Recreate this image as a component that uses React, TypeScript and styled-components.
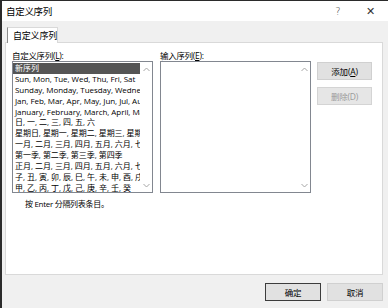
import styled, { createGlobalStyle } from 'styled-components';

const GlobalStyle = createGlobalStyle`
  html, body { margin: 0; padding: 0; background: #f0f0f0; }
  body {
    font-family: "Segoe UI", "Open Sans", "Noto Sans CJK SC", sans-serif;
    color: #000;
  }
`;

const presets = [
  'Sun, Mon, Tue, Wed, Thu, Fri, Sat',
  'Sunday, Monday, Tuesday, Wednesday, Thursday, Friday, Saturday',
  'Jan, Feb, Mar, Apr, May, Jun, Jul, Aug, Sep, Oct, Nov, Dec',
  'January, February, March, April, May, June, July',
  '日, 一, 二, 三, 四, 五, 六',
  '星期日, 星期一, 星期二, 星期三, 星期四, 星期五, 星期六',
  '一月, 二月, 三月, 四月, 五月, 六月, 七月, 八月',
  '第一季, 第二季, 第三季, 第四季',
  '正月, 二月, 三月, 四月, 五月, 六月, 七月, 八月',
  '子, 丑, 寅, 卯, 辰, 巳, 午, 未, 申, 酉, 戌, 亥',
  '甲, 乙, 丙, 丁, 戊, 己, 庚, 辛, 壬, 癸',
];

function Chevron({ down }: { down?: boolean }) {
  return (
    <svg width="7" height="5" viewBox="0 0 7 5">
      <path
        d={down ? 'M0.5 1 L3.5 4 L6.5 1' : 'M0.5 4 L3.5 1 L6.5 4'}
        fill="none"
        stroke="#a6a6a6"
        strokeWidth="1"
      />
    </svg>
  );
}

function ScrollTrack() {
  return (
    <Scroll>
      <Chevron />
      <Chevron down />
    </Scroll>
  );
}

export default function App() {
  return (
    <>
      <GlobalStyle />
      <Window>
        <TitleBar>
          <Title>自定义序列</Title>
          <TitleButtons>
            <TitleGlyph>?</TitleGlyph>
            <TitleGlyph $close>✕</TitleGlyph>
          </TitleButtons>
        </TitleBar>

        <Body>
          <Tabs>
            <Tab>自定义序列</Tab>
          </Tabs>

          <Panel>
            <Columns>
              <Column $w={141}>
                <Label>自定义序列(<u>L</u>):</Label>
                <ListBox>
                  <Rows>
                    <ListRow $selected>新序列</ListRow>
                    {presets.map((p) => (
                      <ListRow key={p}>{p}</ListRow>
                    ))}
                  </Rows>
                  <ScrollTrack />
                </ListBox>
              </Column>

              <Column $w={151}>
                <Label>输入序列(<u>E</u>):</Label>
                <ListBox>
                  <Rows />
                  <ScrollTrack />
                </ListBox>
              </Column>

              <SideButtons>
                <Button $w={55}>添加(<u>A</u>)</Button>
                <Button $w={55} disabled>删除(D)</Button>
              </SideButtons>
            </Columns>

            <Hint>按 Enter 分隔列表条目。</Hint>
          </Panel>

          <Footer>
            <Button $w={56} $default>确定</Button>
            <Button $w={56}>取消</Button>
          </Footer>
        </Body>
      </Window>
    </>
  );
}

/* ── Styled components ───────────────────────────────────── */

const Window = styled.div`
  width: 386px;
  height: 307px;
  border-top: 1px solid #2b2b2b;
  border-left: 2px solid #2b2b2b;
  background: #f0f0f0;
  display: flex;
  flex-direction: column;
  overflow: hidden;
`;

const TitleBar = styled.div`
  height: 20px;
  background: #fff;
  display: flex;
  align-items: center;
  padding-left: 4px;
  flex-shrink: 0;
`;

const Title = styled.span`
  font-size: 9.5px;
  letter-spacing: -0.3px;
`;

const TitleButtons = styled.div`
  margin-left: auto;
  display: flex;
  align-items: center;
  padding-right: 2px;
`;

const TitleGlyph = styled.span<{ $close?: boolean }>`
  width: 32px;
  text-align: center;
  font-size: ${({ $close }) => ($close ? '11px' : '10px')};
  font-family: "DejaVu Sans", sans-serif;
  font-weight: 300;
  color: #333;
`;

const Body = styled.div`
  flex: 1;
  display: flex;
  flex-direction: column;
  padding: 6px 5px 0 3px;
`;

const Tabs = styled.div`
  display: flex;
  padding-left: 2px;
  margin-bottom: -1px;
  position: relative;
  z-index: 1;
`;

const Tab = styled.div`
  height: 16px;
  padding: 0 5px;
  width: 51px;
  box-sizing: border-box;
  background: #fff;
  border: 1px solid #d9d9d9;
  border-left-color: #8c8c8c;
  border-bottom: none;
  font-size: 9px;
  line-height: 16px;
  letter-spacing: -0.2px;
  white-space: nowrap;
`;

const Panel = styled.div`
  height: 233px;
  box-sizing: border-box;
  background: #fff;
  border: 1px solid #d9d9d9;
  padding: 7px 0 0 6px;
  display: flex;
  flex-direction: column;
`;

const Columns = styled.div`
  display: flex;
  gap: 7px;
`;

const Column = styled.div<{ $w: number }>`
  width: ${({ $w }) => $w}px;
  display: flex;
  flex-direction: column;
`;

const Label = styled.div`
  font-size: 8.5px;
  line-height: 11px;
  height: 11px;
  letter-spacing: -0.3px;
  white-space: nowrap;
  u { text-decoration: underline; }
`;

const ListBox = styled.div`
  height: 132px;
  box-sizing: border-box;
  border: 1px solid #828790;
  display: flex;
  background: #fff;
  overflow: hidden;
`;

const Rows = styled.div`
  flex: 1;
  min-width: 0;
  padding-top: 1px;
  overflow: hidden;
`;

const ListRow = styled.div<{ $selected?: boolean }>`
  height: 10.9px;
  line-height: 10.9px;
  padding-left: 2px;
  font-size: 8px;
  letter-spacing: -0.05px;
  white-space: nowrap;
  overflow: hidden;
  background: ${({ $selected }) => ($selected ? '#555' : 'transparent')};
  color: ${({ $selected }) => ($selected ? '#fff' : '#000')};
`;

const Scroll = styled.div`
  width: 12px;
  flex-shrink: 0;
  background: #fff;
  display: flex;
  flex-direction: column;
  align-items: center;
  justify-content: space-between;
  padding: 5px 0 4px;
`;

const SideButtons = styled.div`
  display: flex;
  flex-direction: column;
  gap: 7px;
  padding-top: 12px;
  margin-left: -1px;
`;

const Button = styled.button<{ $w: number; $default?: boolean }>`
  width: ${({ $w }) => $w}px;
  height: 18px;
  padding: 0;
  box-sizing: border-box;
  background: #e1e1e1;
  border: 1px solid ${({ $default }) => ($default ? '#3c3c3c' : '#d0d0d0')};
  font-family: inherit;
  font-size: 8.5px;
  color: #000;
  letter-spacing: -0.2px;
  &:disabled {
    background: #e6e6e6;
    border-color: #d4d4d4;
    color: #9a9a9a;
  }
  u { text-decoration: underline; }
`;

const Hint = styled.div`
  font-size: 8px;
  line-height: 11px;
  padding: 5px 0 0 13px;
  letter-spacing: -0.3px;
`;

const Footer = styled.div`
  display: flex;
  justify-content: flex-end;
  gap: 6px;
  padding-top: 8px;
`;
